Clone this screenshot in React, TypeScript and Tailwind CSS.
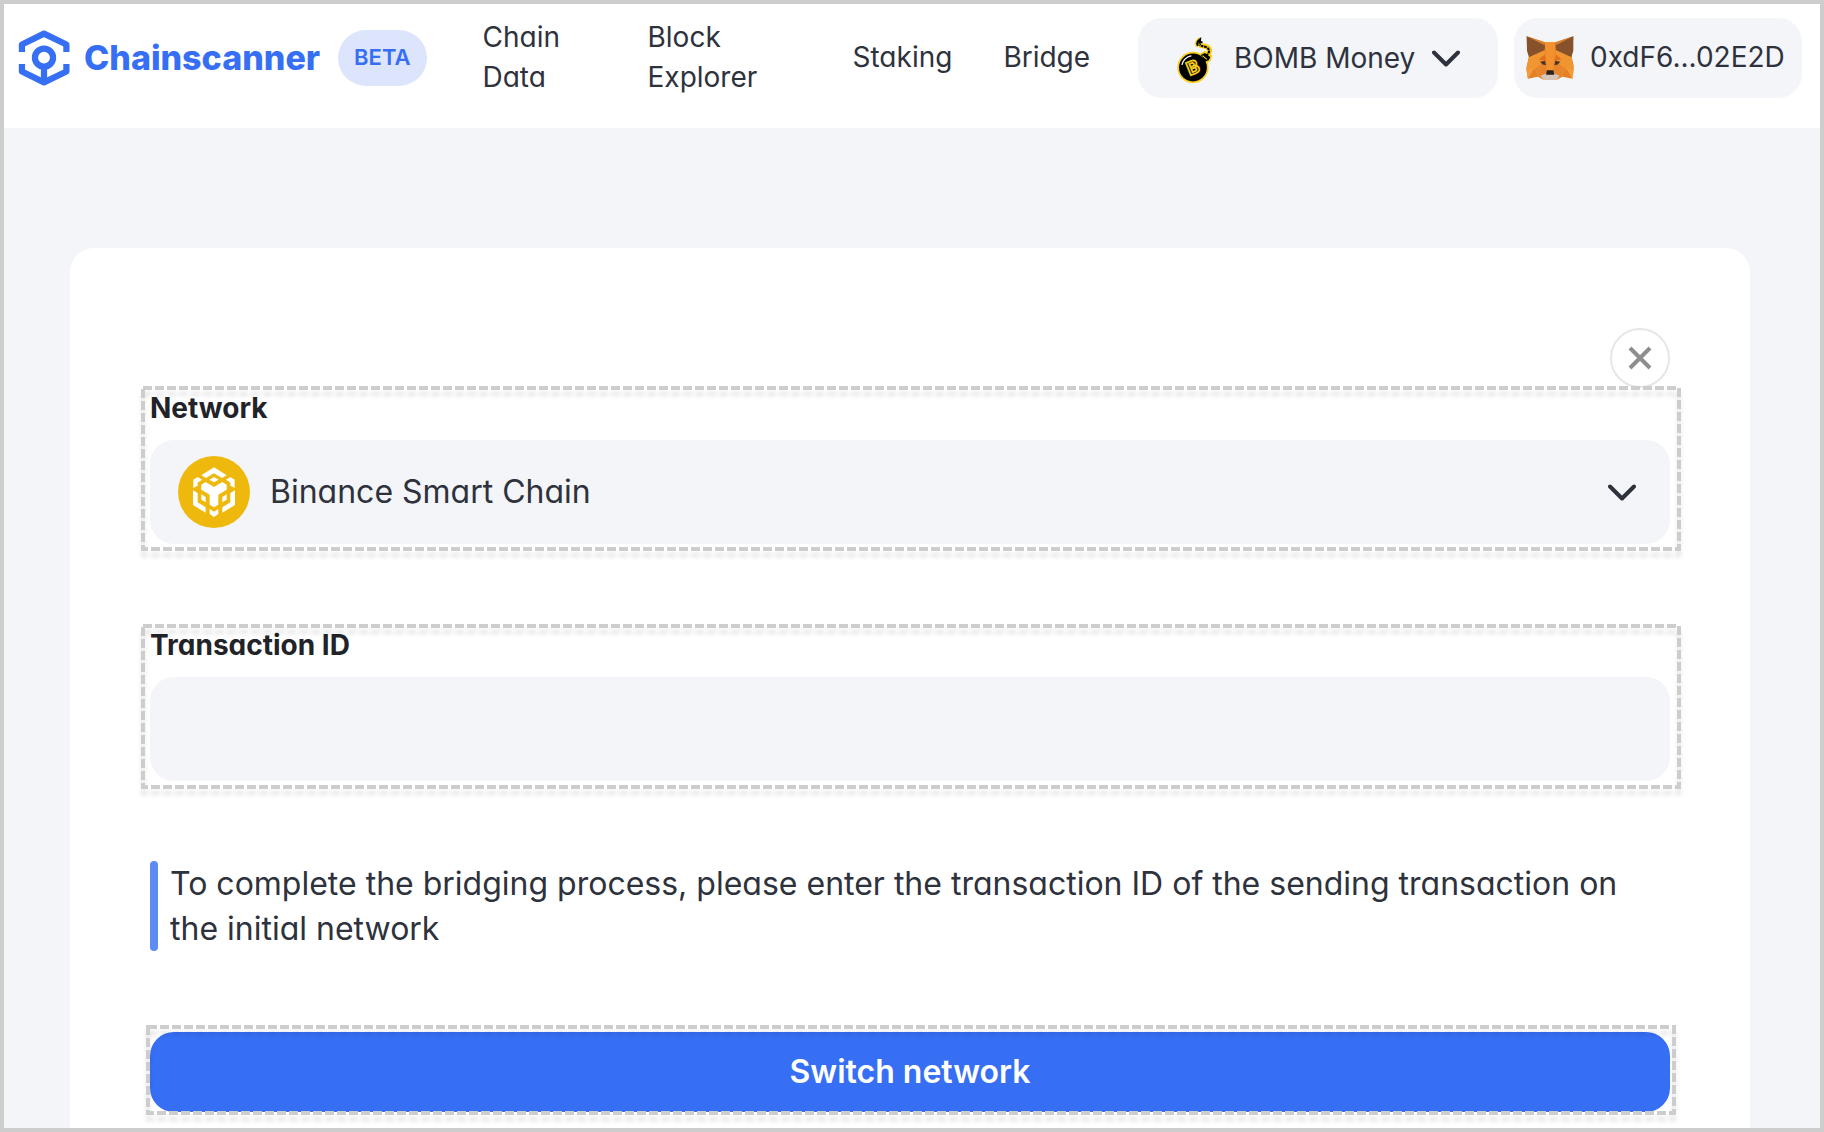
import { useState } from 'react'
import clsx from 'clsx'

function LogoMark() {
  return (
    <svg viewBox="53 59 156 170" className="h-14 w-[52px] shrink-0" fill="none" stroke="#366ff4" strokeWidth="19" strokeLinejoin="round" aria-hidden="true">
      <path d="M64 126V103L131 70L199 103V126" />
      <path d="M64 162V185L131 218L199 185V162" />
      <circle cx="131" cy="143" r="27.5" />
      <path d="M131 170V216" />
    </svg>
  )
}

function BombIcon({ className }: { className?: string }) {
  return (
    <svg viewBox="48 45 112 140" className={className} aria-hidden="true">
      <g fill="none" stroke="#f9ce16" strokeWidth="15" strokeLinejoin="round">
        <path d="M135 104C150 96 150 80 138 76C128 72 122 76 117 68" />
        <path d="M112 74C106 66 112 58 119 53" strokeWidth="12" />
      </g>
      <path d="M117 98L133 88L155 102L150 118L136 126Z" fill="#f9ce16" />
      <circle cx="98" cy="137" r="46" fill="#f9ce16" />
      <circle cx="98" cy="137" r="41" fill="#000" />
      <path d="M121 100L133 94L149 106L145 115L134 120Z" fill="#000" />
      <path d="M136 102C149 94 148 82 137 77C128 73 123 76 118 69" fill="none" stroke="#000" strokeWidth="6" strokeDasharray="8 2" />
      <path d="M113 73C107 66 112 60 119 54L118 64L126 62" fill="none" stroke="#000" strokeWidth="6" />
      <path d="M66 128C70 113 80 106 92 103" fill="none" stroke="#fff" strokeWidth="4" strokeLinecap="round" />
      <path d="M126 102L139 113" stroke="#f9ce16" strokeWidth="3" />
      <text
        x="98"
        y="156"
        textAnchor="middle"
        transform="rotate(-22 98 137)"
        fontSize="54"
        fontWeight="700"
        fontFamily="Inter, sans-serif"
        fill="#000"
        stroke="#f9ce16"
        strokeWidth="5"
      >
        B
      </text>
    </svg>
  )
}

function FoxIcon() {
  return (
    <svg viewBox="48 46 144 134" className="h-[45px] w-12 shrink-0" aria-hidden="true">
      <path d="M50 49L105 67H136L190 49L188 92L184 107L191 138L185 178L158 171L143 179H98L83 171L54 178L49 147L57 107L52 92Z" fill="#e8862b" />
      <path d="M105 67H136L133 110L130 152H111L108 110Z" fill="#f4912f" />
      <path d="M50 49L105 70L104 91L57 112L51 93Z" fill="#87512c" />
      <path d="M190 49L136 70L138 91L184 112L190 93Z" fill="#87512c" />
      <path d="M50 49L105 67L104 76Z" fill="#d9812f" />
      <path d="M190 49L136 67L137 76Z" fill="#d9812f" />
      <path d="M57 112L104 91L108 122L72 149L49 146Z" fill="#f0952f" />
      <path d="M184 112L138 91L134 122L170 149L192 146Z" fill="#f0952f" />
      <path d="M104 104L86 119L109 123Z" fill="#e0701f" />
      <path d="M138 104L155 119L133 123Z" fill="#e0701f" />
      <path d="M49 147H72L54 178Z" fill="#f39a3a" />
      <path d="M192 147H169L187 178Z" fill="#f39a3a" />
      <path d="M72 148L54 178L84 171Z" fill="#e57f22" />
      <path d="M169 148L187 178L157 171Z" fill="#e57f22" />
      <path d="M90 126L105 123L108 136L98 134Z" fill="#4b3525" />
      <path d="M151 126L136 123L133 136L143 134Z" fill="#4b3525" />
      <path d="M84 171L96 140L110 150L108 164Z" fill="#e5842c" />
      <path d="M157 171L145 140L131 150L133 164Z" fill="#e5842c" />
      <path d="M92 168L110 160H131L149 168L141 179H100Z" fill="#d3c5bb" />
      <path d="M111 151H130L133 165H108Z" fill="#28221f" />
      <path d="M54 177L83 171L98 180H54Z" fill="#f3f5f9" />
      <path d="M187 177L158 171L143 180H187Z" fill="#f3f5f9" />
    </svg>
  )
}

function BnbIcon({ className }: { className?: string }) {
  return (
    <svg viewBox="39 32 216 216" className={className} aria-hidden="true">
      <circle cx="147" cy="140" r="108" fill="#eeb80c" />
      <g fill="#fff">
        <path d="M147 66L185 90L171 98L147 84L123 98L109 90Z" />
        <path d="M147 95L161 103L147 111L133 103Z" />
        <path d="M85 103L98 95L111 103L98 112V121L85 128Z" />
        <path d="M209 103L196 95L183 103L196 112V121L209 128Z" />
        <path d="M109 118L122 110L147 125L172 110L185 118V133L160 148V178L147 186L134 178V148L109 133Z" />
        <path d="M84 135L98 143V171L122 186V202L84 179Z" />
        <path d="M210 135L196 143V171L172 186V202L210 179Z" />
        <path d="M109 147L122 155V171L109 163Z" />
        <path d="M185 147L172 155V171L185 163Z" />
        <path d="M134 191L147 199L160 191V206L147 215L134 206Z" />
      </g>
    </svg>
  )
}

function Chevron({ className }: { className?: string }) {
  return (
    <svg viewBox="0 0 28 17" className={clsx('pointer-events-none absolute h-[17px] w-7', className)} fill="none" stroke="#2e323c" strokeWidth="4" strokeLinecap="round" strokeLinejoin="round" aria-hidden="true">
      <path d="M2 2.5L14 14.5L26 2.5" />
    </svg>
  )
}

// dashed marker drawn over a control
function Outline({ className }: { className: string }) {
  return (
    <div className={clsx('pointer-events-none absolute', className)}>
      <svg className="size-full overflow-visible drop-shadow-[0_6px_2px_rgba(0,0,0,0.1)]" aria-hidden="true">
        <rect width="100%" height="100%" fill="none" stroke="#cdcdcd" strokeWidth="4" strokeDasharray="9 3" />
      </svg>
    </div>
  )
}

const links = [
  { label: 'Chain Data', width: 'w-[114px]' },
  { label: 'Block Explorer', width: 'w-[154px]' },
  { label: 'Staking', width: '' },
  { label: 'Bridge', width: '' },
]

export default function App() {
  const [txId, setTxId] = useState('')

  return (
    <div className="flex min-h-screen flex-col border-4 border-[#cdcdcd] bg-[#f3f5f9] font-['Inter',sans-serif] text-[#2e323c] [font-feature-settings:'cv11']">
      <header className="flex items-start bg-white pt-3.5 pr-[18px] pb-[30px] pl-3.5">
        <a href="#" className="flex h-20 items-center gap-3.5 text-[34px] font-extrabold text-[#366ff4] [font-feature-settings:normal]">
          <LogoMark />
          <span className="pb-0.5">Chainscanner</span>
          <span className="ml-1 flex h-14 items-center rounded-full bg-[#dde5fc] px-4 pb-0.5 text-[22px] font-semibold">BETA</span>
        </a>
        <nav className="ml-14 flex h-20 items-center gap-[51px] pb-0.5 text-[28px] leading-10">
          {links.map((link) => (
            <a key={link.label} href="#" className={link.width}>
              {link.label}
            </a>
          ))}
        </nav>
        <div className="ml-auto flex gap-4 text-[28px]">
          <div className="relative">
            <BombIcon className="pointer-events-none absolute top-[18px] left-[38px] h-12 w-[38px]" />
            <select aria-label="Project" className="h-20 w-[360px] appearance-none rounded-3xl bg-[#f3f5f9] pr-20 pl-24">
              <option>BOMB Money</option>
            </select>
            <Chevron className="top-8 right-[38px]" />
          </div>
          <button className="flex h-20 w-72 items-center gap-4 rounded-3xl bg-[#f3f5f9] px-3 pb-0.5">
            <FoxIcon />
            0xdF6...02E2D
          </button>
        </div>
      </header>

      <main className="mt-[120px] mr-[70px] ml-[66px] flex flex-1 flex-col rounded-t-3xl bg-white px-20 pt-20 pb-4">
        <button
          aria-label="Close"
          className="flex size-[60px] items-center justify-center self-end rounded-full border-2 border-[#e6e6e6]"
        >
          <svg viewBox="0 0 24 24" className="size-6" stroke="#8e8e8e" strokeWidth="4" aria-hidden="true">
            <path d="M2 2L22 22M22 2L2 22" />
          </svg>
        </button>

        <div className="relative">
          <label htmlFor="network" className="mb-3 block text-[28px] leading-10 font-bold text-[#212329]">
            Network
          </label>
          <div className="relative">
            <BnbIcon className="pointer-events-none absolute top-4 left-7 size-[72px]" />
            <select id="network" className="block h-[104px] w-full appearance-none rounded-3xl bg-[#f3f5f9] pr-20 pl-[120px] text-[32px]">
              <option>Binance Smart Chain</option>
            </select>
            <Chevron className="top-11 right-[34px]" />
          </div>
          <Outline className="top-0 -right-[9px] -bottom-[5px] -left-[7px]" />
        </div>

        <div className="relative mt-[81px]">
          <label htmlFor="tx" className="mb-3 block text-[28px] leading-10 font-bold text-[#212329]">
            Transaction ID
          </label>
          <input
            id="tx"
            type="text"
            value={txId}
            onChange={(e) => setTxId(e.target.value)}
            className="block h-[104px] w-full rounded-3xl bg-[#f3f5f9] px-7 text-[32px] outline-none"
          />
          <Outline className="top-px -right-[9px] -bottom-[6px] -left-[7px]" />
        </div>

        <div className="mt-20 flex gap-3">
          <div className="w-2 shrink-0 rounded-full bg-[#5c8bf5]" />
          <p className="text-[32px] leading-[45px]">
            To complete the bridging process, please enter the transaction ID of the sending transaction on the initial
            network
          </p>
        </div>

        <div className="relative mt-[81px]">
          <button className="block h-20 w-full rounded-3xl bg-[#366ff4] text-[32px] font-semibold text-white">
            Switch network
          </button>
          <Outline className="-top-[5px] -right-1 -bottom-px -left-0.5" />
        </div>
      </main>
    </div>
  )
}
